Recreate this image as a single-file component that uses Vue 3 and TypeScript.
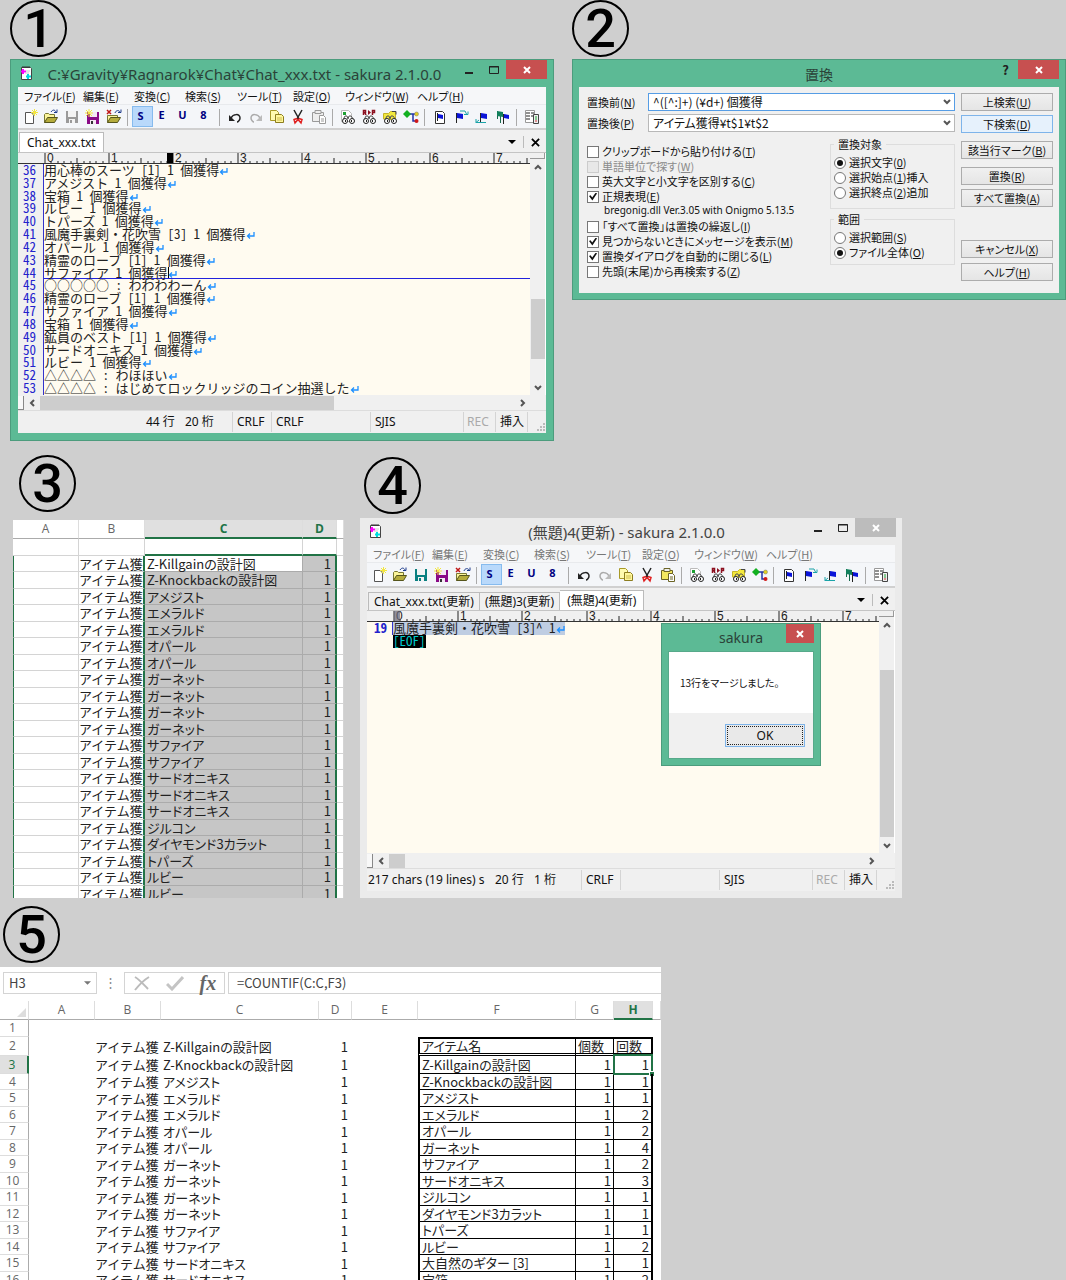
<script setup lang="ts">
interface Line { no: string; text: string; current?: boolean }
interface Editor {
  id: string; badge: string; title: string; active: boolean
  tabs: string[]; message: string; row: string; col: string; eol: string
  lines: Line[]
}

const editors: Editor[] = [
  {
    id: 'chat', badge: '1', title: 'C:¥Gravity¥Ragnarok¥Chat¥Chat_xxx.txt - sakura 2.1.0.0', active: true,
    tabs: ['Chat_xxx.txt'], message: '', row: '44 行', col: '20 桁', eol: 'CRLF',
    lines: [
      { no: '36', text: '用心棒のスーツ [1] 1 個獲得' },
      { no: '37', text: 'アメジスト 1 個獲得' },
      { no: '38', text: '宝箱 1 個獲得' },
      { no: '39', text: 'ルビー 1 個獲得' },
      { no: '40', text: 'トパーズ 1 個獲得' },
      { no: '41', text: '風魔手裏剣・花吹雪 [3] 1 個獲得' },
      { no: '42', text: 'オパール 1 個獲得' },
      { no: '43', text: '精霊のローブ [1] 1 個獲得' },
      { no: '44', text: 'サファイア 1 個獲得', current: true },
      { no: '45', text: '○○○○○ : わわわわーん' },
      { no: '46', text: '精霊のローブ [1] 1 個獲得' },
      { no: '47', text: 'サファイア 1 個獲得' },
      { no: '48', text: '宝箱 1 個獲得' },
      { no: '49', text: '鉱員のベスト [1] 1 個獲得' },
      { no: '50', text: 'サードオニキス 1 個獲得' },
      { no: '51', text: 'ルビー 1 個獲得' },
      { no: '52', text: '△△△△ : わほほい' },
      { no: '53', text: '△△△△ : はじめてロックリッジのコイン抽選した' },
    ],
  },
  {
    id: 'merge', badge: '4', title: '(無題)4(更新) - sakura 2.1.0.0', active: false,
    tabs: ['Chat_xxx.txt(更新)', '(無題)3(更新)', '(無題)4(更新)'],
    message: '217 chars (19 lines) s', row: '20 行', col: '1 桁', eol: '',
    lines: [{ no: '19', text: '風魔手裏剣・花吹雪 [3]^ 1' }],
  },
]

const menus: [string, string][] = [
  ['ファイル', 'F'], ['編集', 'E'], ['変換', 'C'], ['検索', 'S'],
  ['ツール', 'T'], ['設定', 'O'], ['ウィンドウ', 'W'], ['ヘルプ', 'H'],
]
const tools: string[][] = [
  ['new', 'open', 'save', 'saveas', 'close'],
  ['S', 'E', 'U', '8'],
  ['undo', 'redo', 'copy', 'cut', 'paste'],
  ['find', 'replace', 'grep', 'outline'],
  ['mark', 'marknext', 'markprev', 'marklist'],
  ['types'],
]
const ticks = Array.from({ length: 76 }, (_, i) => ({ i, x: Math.round(i * 6.42) }))
const majors = ticks.filter(t => t.i % 10 === 0)

interface Option { label: string; key: string; checked?: boolean; disabled?: boolean; tail?: string; note?: string }
const options: Option[] = [
  { label: 'クリップボードから貼り付ける', key: 'T' },
  { label: '単語単位で探す', key: 'W', disabled: true },
  { label: '英大文字と小文字を区別する', key: 'C' },
  { label: '正規表現', key: 'E', checked: true, note: 'bregonig.dll Ver.3.05 with Onigmo 5.13.5' },
  { label: '「すべて置換」は置換の繰返し', key: 'I' },
  { label: '見つからないときにメッセージを表示', key: 'M', checked: true },
  { label: '置換ダイアログを自動的に閉じる', key: 'L', checked: true },
  { label: '先頭(末尾)から再検索する', key: 'Z' },
]
const groups: { name: string; title: string; items: Option[] }[] = [
  { name: 'target', title: '置換対象', items: [
    { label: '選択文字', key: '0', checked: true },
    { label: '選択始点', key: '1', tail: '挿入' },
    { label: '選択終点', key: '2', tail: '追加' },
  ] },
  { name: 'range', title: '範囲', items: [
    { label: '選択範囲', key: 'S' },
    { label: 'ファイル全体', key: 'O', checked: true },
  ] },
]
const actions: [string, string][][] = [
  [['上検索', 'U'], ['下検索', 'D']],
  [['該当行マーク', 'B']],
  [['置換', 'R'], ['すべて置換', 'A']],
  [['キャンセル', 'X'], ['ヘルプ', 'H']],
]

const items = [
  'Z-Killgainの設計図', 'Z-Knockbackの設計図', 'アメジスト', 'エメラルド', 'エメラルド', 'オパール', 'オパール',
  'ガーネット', 'ガーネット', 'ガーネット', 'ガーネット', 'サファイア', 'サファイア', 'サードオニキス',
  'サードオニキス', 'サードオニキス', 'ジルコン', 'ダイヤモンド3カラット', 'トパーズ', 'ルビー', 'ルビー',
]
const counts: [string, string, string][] = [
  ['アイテム名', '個数', '回数'],
  ['Z-Killgainの設計図', '1', '1'], ['Z-Knockbackの設計図', '1', '1'], ['アメジスト', '1', '1'],
  ['エメラルド', '1', '2'], ['オパール', '1', '2'], ['ガーネット', '1', '4'], ['サファイア', '1', '2'],
  ['サードオニキス', '1', '3'], ['ジルコン', '1', '1'], ['ダイヤモンド3カラット', '1', '1'],
  ['トパーズ', '1', '1'], ['ルビー', '1', '2'], ['大自然のギター [3]', '1', '1'], ['宝箱', '1', '2'],
]
const isText = (t: string) => t.length === 1
</script>

<template>
  <main class="board">
    <svg class="defs" aria-hidden="true">
      <symbol id="t-new" viewBox="0 0 16 16"><path d="M3.500 3.500h6l2 3v8h-8z" fill="#fff" stroke="#555" /><path d="M12.500 0v7M9 3.500h7M10 1l5 5M15 1l-5 5" stroke="#f2e640" /></symbol>
      <symbol id="t-open" viewBox="0 0 16 16"><path d="M1.500 13.500v-8l1-1h3l1 1h5v3" fill="#fbf49a" stroke="#777733" /><path d="M1.500 13.500l3-5h10l-3 5z" fill="#b5ac3c" stroke="#55551c" /><path d="M8 3c2-3 4-2 5 0M11 3.500h3v-3" fill="none" stroke="#1c3a8c" /></symbol>
      <symbol id="t-save" viewBox="0 0 16 16"><path d="M2 2h12v12H2z" fill="currentColor" /><path d="M4 2h8v6H4zM5 10h6v4H5z" fill="#f3f3f3" /><path d="M6 11h2v3H6z" fill="currentColor" /></symbol>
      <symbol id="t-saveas" viewBox="0 0 16 16"><path d="M2 3h12v12H2z" fill="#8a0a86" /><path d="M5 3h7v5H5zM5 11h6v4H5z" fill="#f3e8f3" /><path d="M6 12h2v3H6z" fill="#333" /><path d="M4 0v8M0 4h8M1 1l6 6M7 1L1 7" stroke="#f2e640" /></symbol>
      <symbol id="t-close" viewBox="0 0 16 16"><path d="M1.500 13.500v-7h10v2" fill="#fbf49a" stroke="#777733" /><path d="M1.500 13.500l3-5h10l-3 5z" fill="#b5ac3c" stroke="#55551c" /><path d="M9 4c1-3 4-3 5-1M12 3.500h3v-3" fill="none" stroke="#1c3a8c" /><path d="M1 1l4 4M5 1L1 5" stroke="#c01818" stroke-width="1.500" /></symbol>
      <symbol id="t-undo" viewBox="0 0 16 16"><path d="M4 9c2-4 9-5 9 0 0 2-2 4-3 4" fill="none" stroke="#222" stroke-width="1.500" /><path d="M2 6v6h6z" fill="#222" /></symbol>
      <symbol id="t-redo" viewBox="0 0 16 16"><path d="M12 9c-2-4-9-5-9 0 0 2 2 4 3 4" fill="none" stroke="#aaa" stroke-width="1.500" /><path d="M14 6v6H8z" fill="#bbb" /></symbol>
      <symbol id="t-copy" viewBox="0 0 16 16"><path d="M1.500 1.500h6l2 2v8h-8z" fill="#fffbb0" stroke="#a89a28" /><path d="M6.500 5.500h6l2 2v6h-8z" fill="#fff79a" stroke="#8c7d20" /><path d="M8 9h5M8 11h5" stroke="#cdbd55" /></symbol>
      <symbol id="t-cut" viewBox="0 0 16 16"><path d="M4 1l5 9M12 1L7 10" stroke="#222" stroke-width="1.500" /><path d="M7 9.500l-3 1 1 3.500 3-3.500 3 3.500 1-3.500-3-1" fill="none" stroke="#e02020" stroke-width="1.500" /></symbol>
      <symbol id="t-paste" viewBox="0 0 16 16"><path d="M1.500 3.500h11v9h-11z" fill="var(--clip)" stroke="currentColor" /><path d="M4 1.500h6v3H4z" fill="#eee" stroke="currentColor" /><path d="M8.500 6.500h4l2 2v6h-6z" fill="#fff" stroke="currentColor" /><path d="M10 10h3M10 12h3" stroke="currentColor" /></symbol>
      <symbol id="eyes" viewBox="0 0 16 16"><path d="M3 11l2-4h2l1 3 1-3h2l3 4" fill="none" stroke="#555" /><circle cx="5" cy="12" r="2.500" fill="#fff" stroke="#222" /><circle cx="12" cy="12" r="2.500" fill="#fff" stroke="#222" /><path d="M5 11h1v2H5zM11 11h1v2h-1z" fill="#222" /></symbol>
      <symbol id="t-find" viewBox="0 0 16 16"><path d="M1.500 1.500h7l3 3v8h-10z" fill="#fff" stroke="#bbb" /><path d="M3 3h3v3H3z" fill="#1da032" /><use href="#eyes" /></symbol>
      <symbol id="t-replace" viewBox="0 0 16 16"><path d="M2.500 6V1.500h2v2h-2M4 4l1 2M11.500 6V1.500h2v2h-2" fill="none" stroke="#8c1020" stroke-width="1.500" /><path d="M7 1v5l3-2.500z" fill="#8c1020" /><use href="#eyes" /></symbol>
      <symbol id="t-grep" viewBox="0 0 16 16"><path d="M1.500 10V4.500h5l2-2h5V11z" fill="#f3e83c" stroke="#c5b52a" /><path d="M10 2.500h4v3" fill="none" stroke="#444" /><use href="#eyes" /></symbol>
      <symbol id="t-outline" viewBox="0 0 16 16"><path d="M7 5h6M10 5v7h3" fill="none" stroke="#2233aa" stroke-width="1.500" /><path d="M4 1l4 4-4 4-4-4z" fill="#12b020" /><circle cx="13.500" cy="5" r="2" fill="#e3cf20" stroke="#777" stroke-width=".5" /><circle cx="13.500" cy="12" r="2" fill="#d01818" /></symbol>
      <symbol id="t-mark" viewBox="0 0 16 16"><path d="M3.500 2.500h7l2 2v10h-9z" fill="#fff" stroke="#333" /><path d="M5.500 4v8" stroke="#222" /><path d="M6 5l5 1v4l-5-1z" fill="#0a14d8" /></symbol>
      <symbol id="t-marknext" viewBox="0 0 16 16"><path d="M3.500 4v10" stroke="#222" /><path d="M4 4l6 1v5L4 9z" fill="#0a14d8" /><path d="M7 2h5l2 4M11 5.500h4v-3" fill="none" stroke="#1aa3a8" /></symbol>
      <symbol id="t-markprev" viewBox="0 0 16 16"><path d="M6.500 4v9" stroke="#222" /><path d="M7 4l6 1v5L7 9z" fill="#0a14d8" /><path d="M2 10v4M2 13.500h10M5 11l-3 2.500" fill="none" stroke="#1aa3a8" /></symbol>
      <symbol id="t-marklist" viewBox="0 0 16 16"><path d="M2.500 2v8M5.500 4v10" stroke="#156a4c" /><path d="M2 2l6 1v5L2 7z" fill="#12805c" /><path d="M8.500 5v10" stroke="#222" /><path d="M9 5l5 1v4L9 9z" fill="#0a14d8" /></symbol>
      <symbol id="t-types" viewBox="0 0 16 16"><path d="M1.500 1.500h9v12h-9z" fill="#fff" stroke="#999" /><path d="M2 4h4M2 7h4M2 10h4M7 4h3M7 7h3" stroke="#222" /><path d="M9.500 5.500h5v9h-5z" fill="#eee" stroke="#444" /><path d="M11 8h2M11 10h2" stroke="#1da032" /><path d="M11 12h2" stroke="#c33" /></symbol>
    </svg>

    <section v-for="ed in editors" :key="ed.id" class="row" :class="ed.id">
      <figure v-if="ed.id === 'merge'" class="fig-sheet">
        <figcaption class="badge">3</figcaption>
        <div class="clip">
          <table class="sheet picked">
            <colgroup><col class="w66"><col class="w66"><col class="w158"><col class="w34"><col></colgroup>
            <thead><tr><th>A</th><th>B</th><th class="on">C</th><th class="on">D</th><th></th></tr></thead>
            <tbody>
              <tr><td></td><td></td><td></td><td></td><td></td></tr>
              <tr v-for="(name, i) in items" :key="i">
                <td></td><td class="kind">アイテム獲</td><td>{{ name }}</td><td>1</td><td></td>
              </tr>
            </tbody>
          </table>
        </div>
      </figure>

      <figure class="fig-editor">
        <figcaption class="badge">{{ ed.badge }}</figcaption>
        <div class="window" :class="{ idle: !ed.active }">
          <header class="titlebar">
            <svg class="app" viewBox="0 0 13 16"><path d="M1.500 2.500h9l1 1v11h-10z" fill="#fff" stroke="#444" /><path d="M3 1v2M5 1v2M7 1v2M9 1v2" stroke="#333" /><path d="M3 4v5M1 6.500h5" stroke="#f0f" stroke-width="2" /><path d="M8 9v5M6 11.500h5" stroke="#0dd" stroke-width="2" /><path d="M6 6h4M5 8h4" stroke="#ccc" /></svg>
            <h2>{{ ed.title }}</h2>
            <button class="cap" aria-label="最小化"><svg viewBox="0 0 12 12"><path d="M2 9h8" stroke="currentColor" stroke-width="2" /></svg></button>
            <button class="cap" aria-label="最大化"><svg viewBox="0 0 12 12"><path d="M1.500 2.500h9v7h-9zM1 3h10" fill="none" stroke="currentColor" /></svg></button>
            <button class="x" aria-label="閉じる"><svg viewBox="0 0 12 12"><path d="M3 3l6 6M9 3l-6 6" stroke="#fff" stroke-width="2" /></svg></button>
          </header>
          <div class="client">
            <nav class="menu">
              <button v-for="[label, key] in menus" :key="key">{{ label }}(<u>{{ key }}</u>)</button>
            </nav>
            <div class="tools">
              <div v-for="(group, g) in tools" :key="g" class="tool-group">
                <button v-for="t in group" :key="t" :class="[isText(t) ? 'enc' : 'ico-' + t, { down: t === 'S' }]" :aria-label="t">
                  <template v-if="isText(t)">{{ t }}</template>
                  <svg v-else><use :href="'#t-' + t" /></svg>
                </button>
              </div>
            </div>
            <div class="tabs">
              <button v-for="(tab, i) in ed.tabs" :key="tab" :class="{ cur: i === ed.tabs.length - 1 }">{{ tab }}</button>
              <span class="tab-end"><svg class="tri" viewBox="0 0 8 4"><path d="M0 0h8L4 4z" /></svg><i></i><svg class="tx" viewBox="0 0 10 10"><path d="M1 1l8 8M9 1L1 9" stroke="#000" stroke-width="2" /></svg></span>
            </div>
            <div class="body">
              <div class="pane">
                <svg class="ruler">
                  <line v-for="t in ticks" :key="t.i" :x1="t.x + 27" :x2="t.x + 27" :y1="t.i % 10 === 0 ? 0 : t.i % 5 === 0 ? 5 : 8" y2="11" stroke="#222" />
                  <text v-for="t in majors" :key="t.i" :x="t.x + 29" y="9">{{ t.i / 10 }}</text>
                  <rect v-if="ed.active" x="149" width="6" height="11" />
                  <rect v-else class="mark" x="27" width="6" height="11" />
                </svg>
                <div class="lines">
                  <div v-for="l in ed.lines" :key="l.no" class="line" :class="{ current: l.current }">
                    <span class="no">{{ l.no }}</span>
                    <span class="txt">{{ l.text }}<i v-if="l.current" class="caret"></i><svg class="ret" viewBox="0 0 9 8"><path d="M8 1v4H2M4 2.500L1.500 5 4 7.500" fill="none" stroke="#1e90ff" stroke-width="1.300" /></svg></span>
                  </div>
                  <div v-if="!ed.active" class="line"><span class="no"></span><span class="eof">[EOF]</span></div>
                </div>
              </div>
              <div class="vbar">
                <i class="split"></i>
                <svg viewBox="0 0 8 6"><path d="M1 5l3-3 3 3" /></svg>
                <i class="thumb"></i>
                <svg viewBox="0 0 8 6"><path d="M1 1l3 3 3-3" /></svg>
              </div>
            </div>
            <div class="hbar">
              <i class="split"></i>
              <svg viewBox="0 0 6 8"><path d="M5 1L2 4l3 3" /></svg>
              <i class="thumb"></i>
              <svg viewBox="0 0 6 8"><path d="M1 1l3 3-3 3" /></svg>
            </div>
            <footer class="status">
              <span class="msg">{{ ed.message }}</span><span class="pos">{{ ed.row }}</span><span class="pos col">{{ ed.col }}</span>
              <span class="cell w39">CRLF</span><span class="cell w99">{{ ed.eol }}</span><span class="cell w93">SJIS</span>
              <span class="cell w32 rec">REC</span><span class="cell w32">挿入</span><span class="cell grip"><svg viewBox="0 0 9 9"><path d="M6 0h2v2H6zM6 3h2v2H6zM3 3h2v2H3zM6 6h2v2H6zM3 6h2v2H3zM0 6h2v2H0z" fill="#bbb" /></svg></span>
            </footer>
          </div>
          <div v-if="!ed.active" class="alert" role="alertdialog" aria-labelledby="alert-title">
            <header><h3 id="alert-title">sakura</h3><button class="x" aria-label="閉じる"><svg viewBox="0 0 12 12"><path d="M3 3l6 6M9 3l-6 6" stroke="#fff" stroke-width="2" /></svg></button></header>
            <div class="alert-in"><p>13行をマージしました。</p><div class="alert-foot"><button>OK</button></div></div>
          </div>
        </div>
      </figure>

      <figure v-if="ed.id === 'chat'" class="fig-dialog">
        <figcaption class="badge">2</figcaption>
        <form class="window dialog" @submit.prevent>
          <header class="titlebar">
            <h2>置換</h2>
            <button type="button" class="cap help" aria-label="ヘルプ">?</button>
            <button type="button" class="x" aria-label="閉じる"><svg viewBox="0 0 12 12"><path d="M3 3l6 6M9 3l-6 6" stroke="#fff" stroke-width="2" /></svg></button>
          </header>
          <div class="client form">
            <div class="fields">
              <div class="combo focus"><label for="before">置換前(<u>N</u>)</label><span><input id="before" type="text" value="^([^:]+) (¥d+) 個獲得"><svg viewBox="0 0 8 6"><path d="M1 1l3 3 3-3" /></svg></span></div>
              <div class="combo"><label for="after">置換後(<u>P</u>)</label><span><input id="after" type="text" value="アイテム獲得¥t$1¥t$2"><svg viewBox="0 0 8 6"><path d="M1 1l3 3 3-3" /></svg></span></div>
              <div class="choices">
                <div class="checks">
                  <template v-for="o in options" :key="o.key">
                    <label :class="{ off: o.disabled }"><input type="checkbox" :checked="o.checked" :disabled="o.disabled">{{ o.label }}(<u>{{ o.key }}</u>)</label>
                    <p v-if="o.note">{{ o.note }}</p>
                  </template>
                </div>
                <div class="groups">
                  <fieldset v-for="g in groups" :key="g.name">
                    <legend>{{ g.title }}</legend>
                    <label v-for="o in g.items" :key="o.key"><input type="radio" :name="g.name" :checked="o.checked">{{ o.label }}(<u>{{ o.key }}</u>){{ o.tail }}</label>
                  </fieldset>
                </div>
              </div>
            </div>
            <div class="actions">
              <div v-for="(set, i) in actions" :key="i">
                <button v-for="[label, key] in set" :key="key" type="button" :class="{ default: key === 'D' }">{{ label }}(<u>{{ key }}</u>)</button>
              </div>
            </div>
          </div>
        </form>
      </figure>
    </section>

    <section class="book">
      <div class="badge">5</div>
      <div class="excel">
        <div class="fbar">
          <div class="name"><input aria-label="名前ボックス" value="H3"><svg viewBox="0 0 8 4"><path d="M0 0h8L4 4z" fill="#777" /></svg></div>
          <span class="dots">⋮</span>
          <div class="fx">
            <svg viewBox="0 0 18 16"><path d="M2 2c5 3 9 8 13 12M16 2C11 5 6 10 2 15" fill="none" stroke="#bbb" stroke-width="2" /></svg>
            <svg viewBox="0 0 18 16"><path d="M1 9l5 5L17 2" fill="none" stroke="#c4c4c4" stroke-width="3" /></svg>
            <em>fx</em>
          </div>
          <input class="formula" aria-label="数式" value="=COUNTIF(C:C,F3)">
        </div>
        <table class="sheet counts">
          <colgroup><col class="w29"><col class="w66"><col class="w66"><col class="w158"><col class="w33"><col class="w66"><col class="w158"><col class="w38"><col class="w39"><col></colgroup>
          <thead><tr><th class="corner"><svg viewBox="0 0 9 9"><path d="M9 0v9H0z" fill="#ddd" /></svg></th><th v-for="c in 'ABCDEFG'" :key="c">{{ c }}</th><th class="on">H</th><th></th></tr></thead>
          <tbody>
            <tr><th>1</th><td v-for="n in 9" :key="n"></td></tr>
            <tr v-for="(c, i) in counts" :key="i" :class="{ head: i === 0 }">
              <th :class="{ on: i === 1 }">{{ i + 2 }}</th><td></td><td class="kind">アイテム獲</td><td>{{ items[i] }}</td><td class="num">1</td><td></td>
              <td class="b first">{{ c[0] }}</td><td class="b" :class="{ num: i > 0 }">{{ c[1] }}</td><td class="b last" :class="{ num: i > 0, sel: i === 1 }">{{ c[2] }}</td><td></td>
            </tr>
          </tbody>
        </table>
      </div>
    </section>
  </main>
</template>

<style>
body { margin: 0; background: #cfcfcf; }
</style>

<style scoped>
* { box-sizing: border-box; }
.board {
  height: 100vh; overflow: hidden; background: #cfcfcf; color: #111;
  font: 12px/16px "Noto Sans", "Noto Sans CJK JP", sans-serif;
}
.defs { display: none; }
button { font: inherit; color: inherit; background: none; border: 0; padding: 0; margin: 0; white-space: nowrap; }
input { font: inherit; color: inherit; margin: 0; min-width: 0; }
h2, h3, p, figure { margin: 0; font-weight: 400; }
svg { display: block; }
.row { display: grid; }
.chat { grid-template-columns: minmax(0, 544fr) minmax(0, 494fr); gap: 18px; padding-left: 10px; align-items: start; }
.merge { grid-template-columns: minmax(0, 331fr) minmax(0, 542fr) minmax(0, 148fr); gap: 16px; padding: 14px 0 0 13px; align-items: start; }
.badge {
  width: 57px; height: 57px; border: 2px solid #000; border-radius: 50%; color: #000;
  font: 500 54px/54px Roboto, sans-serif; text-align: center; margin-bottom: 2px;
}
.fig-sheet .badge { margin: 0 0 8px 6px; }
.merge .fig-editor .badge { margin: 2px 0 4px 4px; }

/* window frame */
.window { position: relative; background: #5cba95; border: 1px solid #4c9c7d; padding: 0 7px 7px; }
.idle { background: #ebebeb; border: 0; }
.titlebar { display: flex; height: 27px; align-items: flex-start; margin-right: -1px; color: #2b4339; }
.idle .titlebar { color: #444; }
.app { width: 13px; height: 16px; margin: 5px 0 0 2px; }
.titlebar h2 { flex: 1; font-size: 15px; line-height: 28px; text-align: center; white-space: nowrap; }
.idle .titlebar h2 { padding-left: 66px; }
.cap { width: 25px; height: 19px; display: grid; place-items: center; color: #222; }
.cap svg, .x svg { width: 12px; height: 12px; }
.help { font-weight: 700; font-size: 13px; }
.x { width: 41px; height: 19px; background: #c75050; display: grid; place-items: center; }
.idle .titlebar .x { background: #bcbcbc; }
.client { background: #f0f0f0; }

.menu {
  height: 18px; background: #f6f7f9; border-bottom: 1px solid #e8eaed; display: grid; padding-left: 6px;
  grid-template-columns: 59px 51px 51px 52px 56px 52px 72px auto; align-items: center;
}
.menu button { text-align: left; font: 11px/16px "Noto Sans CJK JP", sans-serif; font-feature-settings: "palt"; }
.idle .menu { color: #777; }
.tools { height: 25px; background: #f4f6f9; border-bottom: 2px solid #d0d0d0; display: flex; padding: 1px 0 0 1px; }
.tool-group { display: flex; }
.tool-group + .tool-group { padding-left: 8px; background: linear-gradient(#aaa, #aaa) 3px 3px / 1px 17px no-repeat; }
.tools button { width: 21px; height: 21px; display: grid; place-items: center; }
.tools svg { width: 16px; height: 16px; }
.tools .enc { font-weight: 700; font-size: 11px; line-height: 18px; color: #000080; padding: 0 4px 3px 0; }
.tools .down { background: #b9d9fb; border: 1px solid #86bbee; }
.ico-save { color: #9a9a9a; }
.ico-paste { color: #9a9a9a; --clip: #eee; }
.idle .ico-save { color: #0a8080; }
.idle .ico-paste { color: #6b6426; --clip: #f3e860; }
.tabs { height: 23px; display: flex; align-items: flex-end; border-bottom: 1px solid #c4c4c4; padding-left: 1px; }
.tabs button { height: 18px; padding: 0 5px; border: 1px solid #bbb; border-bottom: 0; line-height: 16px; font-size: 12px; background: #f0f0f0; }
.tabs button + button { border-left: 0; }
.tabs .cur { height: 20px; background: #fff; padding: 0 7px; }
.tab-end { margin-left: auto; height: 20px; display: flex; align-items: center; gap: 7px; padding-right: 6px; }
.tab-end i { width: 1px; height: 12px; background: #bbb; }
.tri { width: 8px; height: 4px; }
.tx { width: 9px; height: 9px; }

.body { height: 242px; display: flex; border-right: 1px solid #fff; }
.pane { flex: 1; min-width: 0; display: flex; flex-direction: column; }
.ruler { flex: none; width: 100%; height: 11px; border-bottom: 1px solid #333; background: #f0f0f0; }
.ruler text { font: 12px "Liberation Sans", sans-serif; fill: #222; }
.ruler .mark { fill: #667; opacity: .7; }
.lines { flex: 1; min-height: 0; display: grid; grid-template-rows: repeat(18, minmax(0, 1fr)); background: #fffbf0; }
.line {
  display: flex; min-height: 0; white-space: pre; color: #222;
  font: 13px/12px "Noto Sans CJK JP", sans-serif; font-feature-settings: "hwid";
}
.no { width: 26px; padding-right: 7px; text-align: right; color: #22c; background: #f0f0f0; border-right: 1px solid #33c; }
.idle .no { background: none; font-weight: 700; padding-right: 5px; border-right-color: transparent; }
.idle .no:not(:empty) { border-right-color: #33c; }
.txt { display: flex; flex: 1; }
.idle .txt { flex: none; background: #bfcde2; }
.current .txt { border-bottom: 1px solid #22d; }
.caret { width: 1px; background: #000; margin-right: -1px; }
.ret { width: 9px; height: 8px; margin-top: 3px; }
.eof { background: #000; color: #0cc; }
.vbar { width: 15px; display: flex; flex-direction: column; align-items: center; padding-bottom: 4px; }
.vbar .split { width: 15px; height: 6px; border: 1px solid #999; border-width: 0 1px 1px 0; }
.vbar svg { width: 8px; height: 6px; margin-top: 5px; }
.vbar .thumb { width: 14px; height: 60px; background: #cdcdcd; margin: auto 0 21px; }
.idle .vbar .thumb { height: auto; flex: 1; margin: 42px 0 1px; }
.vbar path, .hbar path, .combo path { fill: none; stroke: #555; stroke-width: 2; }
.hbar { height: 16px; display: flex; align-items: center; border-bottom: 1px solid #ddd; padding-right: 20px; }
.hbar .split { width: 6px; height: 14px; border: 1px solid #888; border-width: 0 1px 1px 0; background: #f8f8f8; }
.hbar svg { width: 6px; height: 8px; margin-left: 5px; }
.hbar .thumb { width: 294px; height: 14px; background: #cdcdcd; margin: 0 auto 0 5px; }
.idle .hbar .thumb { width: 16px; }
.status { height: 22px; display: flex; align-items: center; line-height: 20px; white-space: nowrap; }
.msg { flex: 1; overflow: hidden; padding-left: 1px; margin-right: 9px; min-width: 0; }
.pos { width: 39px; }
.pos.col { width: 47px; }
.cell { height: 20px; border-left: 1px solid #d4d4d4; padding-left: 4px; }
.w39 { width: 39px; }
.w99 { width: 99px; }
.w93 { width: 93px; }
.w32 { width: 32px; }
.rec { padding-left: 3px; color: #aaa; }
.grip { width: 19px; display: flex; align-items: flex-end; }
.grip svg { width: 9px; height: 9px; margin-left: 5px; }

.alert { position: absolute; left: 301px; top: 105px; width: 160px; background: #5cba95; border: 1px solid #4c9c7d; padding: 0 6px 6px; }
.alert header { display: flex; height: 27px; }
.alert h3 { flex: 1; text-align: center; font-size: 14px; line-height: 28px; color: #2b4339; padding-left: 28px; }
.alert .x { width: 28px; }
.alert-in { background: #fff; border: 1px solid #57a98a; }
.alert p { height: 61px; line-height: 61px; padding-left: 11px; font-family: "Noto Sans CJK JP", sans-serif; font-size: 10px; font-feature-settings: "palt"; white-space: nowrap; }
.alert-foot { background: #f0f0f0; display: flex; justify-content: flex-end; padding: 11px 8px 11px 0; }
.alert-foot button { width: 80px; height: 23px; border: 1px solid #7eb4ea; background: #e9e9e9; outline: 1px dotted #222; outline-offset: -3px; line-height: 19px; }

/* replace dialog */
.dialog { font: 11px/15px "Noto Sans CJK JP", sans-serif; font-feature-settings: "palt"; padding: 0 6px 6px; }
.dialog .titlebar { margin-right: 0; }
.dialog .titlebar h2 { padding-left: 66px; font-size: 14px; font-feature-settings: normal; }
.form { display: flex; gap: 6px; padding: 6px 6px 12px 8px; }
.fields { flex: 1; min-width: 0; }
.combo { display: flex; height: 18px; margin-bottom: 3px; align-items: center; }
.combo label { width: 61px; }
.combo span { flex: 1; height: 18px; display: flex; align-items: center; background: #fff; border: 1px solid #b8b8b8; padding-right: 3px; min-width: 0; }
.combo.focus span { border-color: #569de5; }
.combo input { flex: 1; border: 0; background: none; outline: 0; padding: 0 4px; height: 16px; line-height: 16px; font-size: 12px; font-feature-settings: "palt"; }
.combo svg { width: 8px; height: 6px; }
.choices { display: flex; justify-content: space-between; }
.checks { padding-top: 9px; }
.checks label, .groups label { display: flex; height: 15px; align-items: center; white-space: nowrap; }
.checks p { height: 15px; padding-left: 17px; font: 10px/13px "Noto Sans", sans-serif; }
.off { color: #8b8b8b; }
.checks input, .groups input { appearance: none; width: 12px; height: 12px; border: 1px solid #777; background: #fff; margin-right: 3px; flex: none; display: grid; place-items: center; }
.off input { border-color: #ccc; background: #e8e8e8; }
.checks input:checked::before { content: ""; width: 8px; height: 8px; background: #111; clip-path: polygon(0 45%, 20% 35%, 40% 62%, 85% 0, 100% 12%, 42% 100%); }
.groups input { border-radius: 50%; }
.groups input:checked::before { content: ""; width: 6px; height: 6px; border-radius: 50%; background: #111; }
.groups { width: 125px; padding-top: 3px; }
fieldset { margin: 0 0 4px; border: 1px solid #ddd; padding: 5px 3px 8px; min-width: 0; }
legend { padding: 0 4px; line-height: 12px; height: 12px; }
fieldset + fieldset { padding-bottom: 4px; }
.actions { width: 92px; }
.actions div { display: flex; flex-direction: column; gap: 4px; margin-bottom: 8px; }
.actions div:last-child { margin: 33px 0 0; gap: 5px; }
.actions button { height: 18px; line-height: 14px; border: 1px solid #acacac; background: linear-gradient(#f0f0f0, #e5e5e5); }
.actions .default { border-color: #7eb4ea; background: #e6f1fc; }

/* sheets */
.clip { height: 378px; overflow: hidden; }
.sheet {
  width: 100%; table-layout: fixed; border-collapse: separate; border-spacing: 0; background: #fff; color: #222;
  font: 13px/14px "Noto Sans CJK JP", sans-serif; font-feature-settings: "palt";
}
.sheet th { font: 12px/14px "Open Sans", sans-serif; color: #666; padding: 0; }
.sheet td { padding: 0 1px; height: 17px; white-space: nowrap; }
.sheet tr:nth-child(even) td { height: 16px; }
.sheet .kind { font-feature-settings: normal; padding-left: 0; }
.sheet thead th { height: 19px; border-bottom: 1px solid #ababab; border-right: 1px solid #ddd; }
.sheet thead .on { background: #e0e0e0; color: #217346; font-weight: 700; border-bottom: 2px solid #217346; }
.w29 { width: 29px; }
.w33 { width: 33px; }
.w34 { width: 34px; }
.w38 { width: 38px; }
.w66 { width: 66px; }
.w158 { width: 158px; }
col.w39 { width: 39px; }
.picked td { border-right: 1px solid #d4d4d4; border-bottom: 1px solid #d4d4d4; }
.picked tr:nth-child(1) td:nth-child(3), .picked tr:nth-child(1) td:nth-child(4) { border-bottom: 2px solid #217346; }
.picked tr + tr td:nth-child(1) { border-left: 1px solid #217346; }
.picked tr + tr td:nth-child(2) { border-right: 2px solid #217346; }
.picked tr + tr td:nth-child(3) { background: #c6c6c6; border-color: #ababab; padding-left: 2px; }
.picked tr:nth-child(2) td:nth-child(3) { background: #fff; }
.picked tr + tr td:nth-child(4) { background: #c6c6c6; border-bottom-color: #ababab; border-right: 2px solid #217346; text-align: right; padding-right: 4px; }

.book { width: 62%; padding-top: 8px; }
.book .badge { margin: 0 0 4px 3px; }
.excel { background: #fff; padding-top: 5px; }
.fbar { display: flex; height: 22px; padding-left: 3px; margin-bottom: 7px; font: 13px/20px "Noto Sans CJK JP", sans-serif; color: #444; }
.fbar > div { border: 1px solid #d4d4d4; display: flex; align-items: center; }
.name { width: 94px; padding: 0 5px; }
.name input { flex: 1; border: 0; padding: 0; background: none; }
.name svg { width: 7px; height: 4px; }
.dots { width: 27px; text-align: center; color: #888; }
.fx { width: 101px; justify-content: space-around; }
.fx svg { width: 18px; height: 16px; }
.fx em { font: italic 700 20px/18px "Liberation Serif", serif; color: #666; }
.formula { flex: 1; border: 1px solid #d4d4d4; border-right: 0; margin-left: 3px; padding: 0 8px; background: #fff; }
.counts tbody th { border-right: 1px solid #ababab; border-bottom: 1px solid #ddd; padding-right: 3px; }
.counts tbody .on { background: #e0e0e0; color: #217346; border-right: 2px solid #217346; }
.counts .corner svg { width: 9px; height: 9px; margin: 4px 0 0 17px; }
.counts td:nth-child(4) { padding-left: 2px; }
.counts .head td, .counts .head + tr td { height: 18px; }
.num { text-align: right; }
.counts td.num { padding-right: 4px; }
.counts td.b { border: 0 solid #000; border-bottom-width: 1px; border-right-width: 1px; padding: 0 2px; }
.counts td.first { border-left-width: 2px; }
.counts td.last { border-right-width: 2px; position: relative; }
.counts .head .b { border-top-width: 2px; border-bottom: 3px double #000; }
.sel::before { content: ""; position: absolute; inset: -2px -2px -2px -1px; border: 2px solid #217346; }
.sel::after { content: ""; position: absolute; right: -3px; bottom: -3px; width: 4px; height: 4px; background: #217346; outline: 1px solid #fff; }
</style>
